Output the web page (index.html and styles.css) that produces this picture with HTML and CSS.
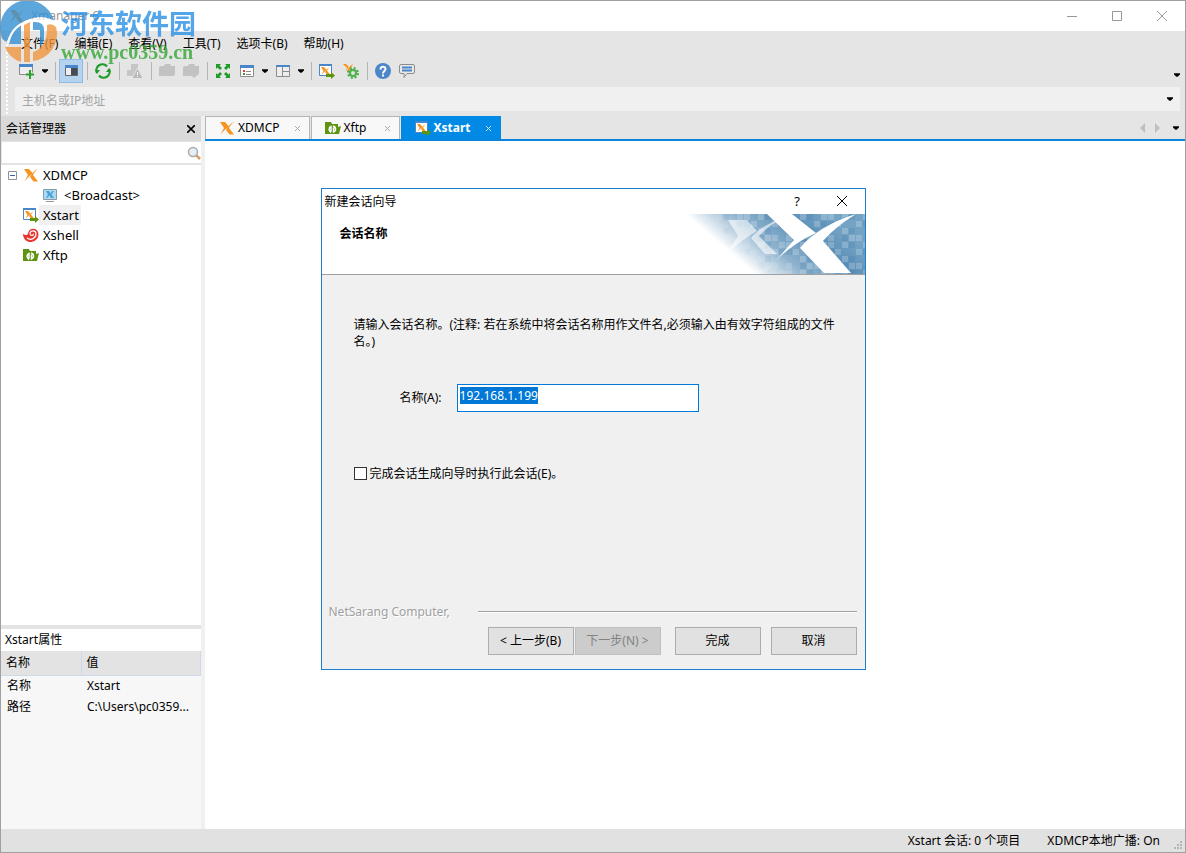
FILE: index.html
```html
<!DOCTYPE html>
<html lang="zh-CN">
<head>
    <meta charset="UTF-8">
    <meta name="viewport" content="width=device-width, initial-scale=1.0">
    <title>Xmanager 6</title>
    <link rel="stylesheet" href="styles.css">
</head>
<body>
    <!-- 公用图标 -->
    <svg class="defs" width="0" height="0" aria-hidden="true">
        <symbol id="i-x" viewBox="0 0 16 16">
            <path fill="#f7931e" d="M1 2h5l4 4.500Q6 9 1.500 14.500L5 8z"/>
            <path fill="#f7931e" d="M15.500 1.500Q11 5 10 8l5 6.500h-4.500L7 10Q10 4 15.500 1.500z"/>
        </symbol>
        <symbol id="i-xstart" viewBox="0 0 16 16">
            <path fill="#fff" stroke="#4a86c8" d="M.5 1.500h12v11H.5z"/>
            <path fill="#4a86c8" d="M0 1h13v2H0z"/>
            <path fill="#f7931e" d="M2 4h3l2.500 3Q5 9 2.500 11.500L4.500 8zM11 4Q8.500 6 8 7.500l3 4H8L6 9Q7.500 5.500 11 4z"/>
            <path fill="#5f9410" d="M7 11h5V9l4 3.500-4 3.500v-2H7z"/>
        </symbol>
        <symbol id="i-xftp" viewBox="0 0 16 16">
            <path fill="#5f9410" d="M0 2h6l1 2h6v3l3-1-2 8H0z"/>
            <path fill="none" stroke="#fff" stroke-width="1.500" d="M6 12.500C3.500 11 3.500 7.500 6 6.500v5M8 6c3 .5 3.500 5 .5 6V7.500"/>
        </symbol>
        <symbol id="i-xshell" viewBox="0 0 16 16">
            <path fill="#e8352e" d="M0 7c3 2 5 1 5-1 1-5 8-6 10-1 2 6-3 10-8 10-4 0-7-4-7-8z"/>
            <path fill="none" stroke="#fff" stroke-width="1.200" d="M4 11c4 3 9 0 9-4 0-4-6-4-6-.5 0 2.500 3.500 2.500 3.500.3"/>
        </symbol>
        <symbol id="i-monitor" viewBox="0 0 16 16">
            <path fill="#a9dbf7" stroke="#8b9aa5" d="M1.500 2.500h13v10h-13z"/>
            <path fill="#4b9fd5" d="M4 4h3l2 3-4 4H4l2-3.500zM12 4 9.500 7.500 12 11H9L7.500 8.500 10 4z"/>
            <path fill="#999" d="M4 14h8v1H4z"/>
        </symbol>
        <symbol id="i-caret" viewBox="0 0 5 3"><path d="M0 0h5v1L3 3H2L0 1z"/></symbol>
        <symbol id="i-close" viewBox="0 0 10 10"><path fill="none" stroke="currentColor" d="M0 0l10 10M10 0L0 10"/></symbol>
    </svg>

    <div class="window">
        <header class="titlebar">
            <svg class="icon" width="16" height="16"><use href="#i-x"/></svg>
            <h1>Xmanager 6</h1>
            <div class="win-btns">
                <button aria-label="最小化"><svg width="10" height="10"><path d="M0 5.500h10"/></svg></button>
                <button aria-label="最大化"><svg width="10" height="10"><path d="M.5.500h9v9h-9z"/></svg></button>
                <button aria-label="关闭"><svg width="10" height="10"><path d="M0 0l10 10M10 0L0 10"/></svg></button>
            </div>
        </header>

        <div class="bars">
            <nav class="menu">
                <button>文件(F)</button>
                <button>编辑(E)</button>
                <button>查看(V)</button>
                <button>工具(T)</button>
                <button>选项卡(B)</button>
                <button>帮助(H)</button>
            </nav>
            <div class="toolbar">
                <button class="tool" aria-label="新建"><svg width="16" height="16">
                    <path fill="#eee" stroke="#8c8c8c" d="M.5 1.500h13v10H.5z"/><path fill="#4a86c8" d="M0 1h14v3H0z"/>
                    <path stroke="#e5e5e5" stroke-width="4" d="M11 7v9M7 11.500h9"/><path stroke="#2ca02c" stroke-width="2" d="M11 7v9M7 11.500h8"/></svg></button>
                <button class="drop" aria-label="新建选项"><svg width="6" height="4"><use href="#i-caret"/></svg></button>
                <i class="sep"></i>
                <button class="tool on" aria-label="会话管理器"><svg width="16" height="16">
                    <path fill="#eee" stroke="#666" d="M2.500 2.500h12v10h-12z"/><path fill="#4a86c8" d="M2 2h13v3H2z"/><path fill="#444c55" d="M8 5h6v7H8z"/></svg></button>
                <i class="sep"></i>
                <button class="tool" aria-label="刷新"><svg width="16" height="16">
                    <path fill="none" stroke="#1f9d2b" stroke-width="2.200" d="M2 10A6 6 0 0 1 12 3.500M14 6a6 6 0 0 1-10 6.500"/>
                    <path fill="#1f9d2b" d="M0 7h5L2 11zM11 9h5l-2-4z"/></svg></button>
                <i class="sep"></i>
                <button class="tool" disabled aria-label="警告"><svg width="16" height="16">
                    <path fill="#c6c6c6" d="M4 1h7v6L8 13H0V7h4z"/><path fill="#b9b9b9" stroke="#e5e5e5" d="M10.500 5L16 15.500H5z"/><path stroke="#fff" d="M10.500 9v3m0 1v1"/></svg></button>
                <i class="sep"></i>
                <button class="tool" disabled aria-label="连接"><svg width="16" height="16">
                    <path fill="#c2c2c2" d="M0 5q0-2 2-2h3l1-2h5l1 2h4v9l-2 1H0z"/></svg></button>
                <button class="tool" disabled aria-label="断开"><svg width="16" height="16">
                    <path fill="#c2c2c2" d="M0 5q0-2 2-2h3l1-2h5l1 2h4v8l-5 4-2-2H0z"/></svg></button>
                <i class="sep"></i>
                <button class="tool" aria-label="全屏"><svg width="16" height="16">
                    <path fill="#1f9d2b" d="M1 1h5L4.500 2.500 7 5 5 7 2.500 4.500 1 6zM15 1v5l-1.500-1.500L11 7 9 5l2.500-2.500L10 1zM1 15v-5l1.500 1.500L5 9l2 2-2.500 2.500L6 15zM15 15h-5l1.500-1.500L9 11l2-2 2.500 2.500L15 10z"/></svg></button>
                <button class="tool" aria-label="查看方式"><svg width="16" height="16">
                    <path fill="#fff" stroke="#8c8c8c" d="M1.500 2.500h13v11h-13z"/><path fill="#4a86c8" d="M1 2h14v3H1z"/>
                    <path fill="#e33" d="M4 7h2v2H4z"/><path fill="#2ca02c" d="M4 10h2v2H4z"/><path stroke="#888" d="M7 8.500h5M7 11.500h5"/></svg></button>
                <button class="drop" aria-label="查看选项"><svg width="6" height="4"><use href="#i-caret"/></svg></button>
                <button class="tool" aria-label="布局"><svg width="16" height="16">
                    <path fill="#eee" stroke="#8c8c8c" d="M1.500 2.500h13v11h-13zM7.500 3v10M8 8.500h6"/><path fill="#4a86c8" d="M1 2h14v2H1z"/></svg></button>
                <button class="drop" aria-label="布局选项"><svg width="6" height="4"><use href="#i-caret"/></svg></button>
                <i class="sep"></i>
                <button class="tool" aria-label="Xstart"><svg width="16" height="16"><use href="#i-xstart"/></svg></button>
                <button class="tool" aria-label="Xconfig"><svg width="16" height="16">
                    <path fill="#f7931e" d="M0 1h3l3 3-4 5 2-4zM10 1Q6 3 4 9h2z"/>
                    <circle cx="10" cy="10" r="4.700" fill="none" stroke="#4cb04c" stroke-width="2.500" stroke-dasharray="2 1.690"/>
                    <circle cx="10" cy="10" r="3" fill="none" stroke="#4cb04c" stroke-width="2"/></svg></button>
                <i class="sep"></i>
                <button class="tool" aria-label="帮助"><svg width="16" height="16">
                    <circle cx="8" cy="8" r="8" fill="#4a86c8"/>
                    <path fill="none" stroke="#fff" stroke-width="2" d="M5.500 6.500c0-3.500 5-3.500 5-.5C10.500 8 8 8 8 10.500M8 11.500v2"/></svg></button>
                <button class="tool" aria-label="反馈"><svg width="16" height="16">
                    <path fill="#e9e9e9" stroke="#8c8c8c" d="M2 1.500h12q1.500 0 1.500 1.500v6q0 1.500-1.500 1.500H8L5 14.500v-4H2Q.5 10.500.5 9V3Q.5 1.500 2 1.500z"/>
                    <path stroke="#4a86c8" d="M3 4.500h10M3 7.500h10" stroke-width="2"/></svg></button>
                <button class="drop more" aria-label="更多"><svg width="6" height="4"><use href="#i-caret"/></svg></button>
            </div>
            <div class="address">
                <input type="text" placeholder="主机名或IP地址" aria-label="主机名或IP地址">
                <button class="drop" aria-label="历史"><svg width="6" height="4"><use href="#i-caret"/></svg></button>
            </div>
        </div>

        <div class="main">
            <aside class="sidebar">
                <div class="side-head">
                    <h2>会话管理器</h2>
                    <button aria-label="关闭会话管理器"><svg width="8" height="8" viewBox="0 0 10 10" stroke-width="2"><use href="#i-close"/></svg></button>
                </div>
                <div class="search">
                    <input type="text" aria-label="搜索会话">
                    <svg width="14" height="14"><path stroke="#d9a066" stroke-width="2.500" d="M9 9l4 4"/><circle cx="6" cy="6" r="4.500" fill="#e3eef5" stroke="#aaa" stroke-width="1.500"/></svg>
                </div>
                <ul class="tree">
                    <li><svg class="fold" width="9" height="9"><path fill="#fff" stroke="#919191" d="M.5.500h8v8h-8z"/><path stroke="#3b5fa8" d="M2 4.500h5"/></svg>
                        <svg width="16" height="16"><use href="#i-x"/></svg><span>XDMCP</span></li>
                    <li class="child"><svg width="16" height="16"><use href="#i-monitor"/></svg><span>&lt;Broadcast&gt;</span></li>
                    <li class="leaf"><svg width="16" height="16"><use href="#i-xstart"/></svg><span class="sel">Xstart</span></li>
                    <li class="leaf"><svg width="16" height="16"><use href="#i-xshell"/></svg><span>Xshell</span></li>
                    <li class="leaf"><svg width="16" height="16"><use href="#i-xftp"/></svg><span>Xftp</span></li>
                </ul>
                <section class="props">
                    <h2>Xstart属性</h2>
                    <table>
                        <thead><tr><th>名称</th><th>值</th></tr></thead>
                        <tbody>
                            <tr><td>名称</td><td>Xstart</td></tr>
                            <tr><td>路径</td><td>C:\Users\pc0359...</td></tr>
                        </tbody>
                    </table>
                </section>
            </aside>

            <main class="content">
                <div class="tabs">
                    <div class="tab"><svg width="16" height="16"><use href="#i-x"/></svg><a href="#">XDMCP</a><button aria-label="关闭 XDMCP"><svg width="5" height="5" viewBox="0 0 10 10" stroke-width="2"><use href="#i-close"/></svg></button></div>
                    <div class="tab"><svg width="16" height="16"><use href="#i-xftp"/></svg><a href="#">Xftp</a><button aria-label="关闭 Xftp"><svg width="5" height="5" viewBox="0 0 10 10" stroke-width="2"><use href="#i-close"/></svg></button></div>
                    <div class="tab active"><svg width="16" height="16"><use href="#i-xstart"/></svg><a href="#">Xstart</a><button aria-label="关闭 Xstart"><svg width="5" height="5" viewBox="0 0 10 10" stroke-width="2"><use href="#i-close"/></svg></button></div>
                    <div class="tab-nav">
                        <button disabled aria-label="上一个"><svg width="5" height="10"><path fill="#bfbfbf" d="M5 0v10L0 5z"/></svg></button>
                        <button disabled aria-label="下一个"><svg width="5" height="10"><path fill="#bfbfbf" d="M0 0v10l5-5z"/></svg></button>
                        <button class="drop" aria-label="标签列表"><svg width="6" height="4"><use href="#i-caret"/></svg></button>
                    </div>
                </div>
            </main>
        </div>

        <footer class="status">
            <span>Xstart 会话: 0 个项目</span>
            <span>XDMCP本地广播: On</span>
            <svg width="10" height="10" fill="#b5b5b5"><path d="M7 1h2v2H7zM4 4h2v2H4zM7 4h2v2H7zM1 7h2v2H1zM4 7h2v2H4zM7 7h2v2H7z"/></svg>
        </footer>
    </div>

    <!-- 新建会话向导 -->
    <div class="overlay">
        <form class="dialog" role="dialog" aria-labelledby="dlg-title">
            <div class="dlg-bar">
                <h2 id="dlg-title">新建会话向导</h2>
                <button type="button" aria-label="帮助">?</button>
                <button type="button" aria-label="关闭"><svg width="10" height="10"><use href="#i-close"/></svg></button>
            </div>
            <div class="dlg-head">
                <h3>会话名称</h3>
                <svg width="205" height="60" viewBox="0 0 205 60">
                    <defs>
                        <linearGradient id="g1" gradientUnits="userSpaceOnUse" x1="60" y1="30" x2="120" y2="-40">
                            <stop offset="0" stop-color="#fff"/>
                            <stop offset=".35" stop-color="#8fb3ce"/>
                            <stop offset=".7" stop-color="#5c90b8"/>
                            <stop offset="1.000" stop-color="#75a3c4"/>
                        </linearGradient>
                        <pattern id="g2" width="42" height="28" patternUnits="userSpaceOnUse">
                            <path fill="#fff" fill-opacity=".2" d="M0 0h6v6H0zM14 0h6v6h-6zM35 0h6v6h-6zM7 7h6v6H7zM28 7h6v6h-6zM14 14h6v6h-6zM0 21h6v6H0zM21 21h6v6h-6zM28 21h6v6h-6z"/>
                            <path fill="#3d78a8" fill-opacity=".2" d="M21 0h6v6h-6zM0 7h6v6H0zM35 7h6v6h-6zM21 14h6v6h-6zM14 21h6v6h-6z"/>
                        </pattern>
                        <linearGradient id="g3" gradientUnits="userSpaceOnUse" x1="60" y1="30" x2="120" y2="-40">
                            <stop offset=".05" stop-color="#fff" stop-opacity="0"/>
                            <stop offset=".4" stop-color="#fff"/>
                        </linearGradient>
                        <mask id="m1"><path fill="url(#g3)" d="M0 0h205v60H0z"/></mask>
                    </defs>
                    <path fill="url(#g1)" d="M0 0h205v60H0z"/>
                    <path fill="url(#g2)" mask="url(#m1)" d="M0 0h205v60H0z"/>
                    <path fill="#fff" fill-opacity=".6" d="M68 6h19l10 11Q78 28 65 42l13-20zM123 4Q100 12 91 24l14 16h12L99 22Q108 12 123 4z"/>
                    <path fill="#fff" d="M107 0h25l24 19Q125 33 104 60l30-34zM196 0Q158 12 140 34l24 25h27L163 27Q175 13 196 0z"/>
                </svg>
            </div>
            <div class="dlg-body">
                <p>请输入会话名称。(注释: 若在系统中将会话名称用作文件名,必须输入由有效字符组成的文件名。)</p>
                <div class="field">
                    <label for="name">名称(A):</label>
                    <input type="text" id="name" value="192.168.1.199">
                </div>
                <label class="check"><input type="checkbox"><span>完成会话生成向导时执行此会话(E)。</span></label>
            </div>
            <div class="dlg-foot">
                <div class="brand"><span>NetSarang Computer,</span><hr></div>
                <div class="actions">
                    <button type="button">&lt; 上一步(B)</button>
                    <button type="button" disabled>下一步(N) &gt;</button>
                    <button type="button" class="gap">完成</button>
                    <button type="button" class="gap">取消</button>
                </div>
            </div>
        </form>
    </div>

    <!-- 左上角水印 -->
    <div class="watermark">
        <svg width="58" height="62" viewBox="0 0 58 62">
            <path fill="#3490d3" d="M1 33A27 27 0 0 1 54 20Q42 13 30 18Q12 24 7 41Q1 39 1 33z"/>
            <path fill="#3490d3" d="M9 43Q12 28 21 24v19zM33 21q11-1 11 8v11l-4 5V29h-7z"/>
            <path fill="#f0953f" d="M5 46h16v15Q9 57 5 46zM24 24l6-3v40h-6zM56 26A27 27 0 0 1 33 60v-9Q48 46 47 24q5-2 9 2z"/>
            <path fill="none" stroke="#fff" stroke-width="2" d="M8 42Q12 24 31 19Q44 15 55 21"/>
        </svg>
        <div>
            <strong>河东软件园</strong>
            <em>www.pc0359.cn</em>
        </div>
    </div>

    <script>
        // 打开时选中默认名称
        var nameInput = document.getElementById("name")
        nameInput.focus()
        nameInput.select()
    </script>
</body>
</html>
```
FILE: styles.css
```css
*{
    padding: 0;
    margin: 0;
    box-sizing: border-box;
}
body{
    font: 12px/16px "Noto Sans", "Noto Sans CJK SC", sans-serif;
    color: #000;
    background-color: #fff;
}
button,
input{
    font: inherit;
    color: inherit;
    border: 0;
    background: none;
    outline: none;
}
button{
    display: flex;
    align-items: center;
    justify-content: center;
    white-space: nowrap;
}
h1,
h2,
h3{
    font-size: 12px;
    font-weight: normal;
}
li{
    list-style: none;
}
svg{
    flex: none;
    display: block;
}
.defs{
    position: absolute;
}

.window{
    height: 100vh;
    display: flex;
    flex-direction: column;
    border: 1px solid #a0a0a0;
}
/* 标题栏 */
.titlebar{
    height: 30px;
    display: flex;
    align-items: center;
    gap: 6px;
    padding-left: 8px;
    color: #999;
}
.win-btns{
    display: flex;
    margin-left: auto;
    padding-right: 1px;
}
.win-btns button{
    width: 45px;
    height: 28px;
}
.win-btns path{
    fill: none;
    stroke: #999;
}

/* 菜单和工具栏 */
.bars{
    padding: 0 5px 5px 14px;
    background: radial-gradient(circle, #fff 1px, transparent 1px) 4px 0 / 4px 4px repeat-y #e5e5e5;
}
.menu{
    height: 25px;
    display: flex;
    align-items: center;
    gap: 16px;
    padding-left: 6px;
}
.toolbar{
    height: 31px;
    display: flex;
    align-items: center;
    padding-bottom: 1px;
}
.tool{
    width: 24px;
    height: 24px;
}
.tool.on{
    background-color: #b3d3ee;
    border: 1px solid #8fbde4;
}
.drop{
    width: 12px;
    height: 24px;
}
.drop.more{
    width: 6px;
    margin-left: auto;
    padding-top: 8px;
}
.sep{
    width: 1px;
    height: 18px;
    margin: 0 3px 0 4px;
    background-color: #b5b5b5;
}
.address{
    height: 24px;
    display: flex;
    background-color: #f0f0f0;
    padding: 0 4px 0 7px;
}
.address input{
    flex: 1;
    min-width: 0;
    padding-top: 3px;
}
.address input::placeholder{
    color: #a5a5a5;
}

.main{
    flex: 1;
    min-height: 0;
    display: grid;
    grid-template-columns: 200px 1fr;
    column-gap: 4px;
    background-color: #f0f0f0;
}
/* 左侧 */
.sidebar{
    display: flex;
    flex-direction: column;
    background-color: #e3e3e3;
}
.side-head{
    height: 25px;
    display: flex;
    align-items: center;
    justify-content: space-between;
    padding: 0 6px 0 5px;
    background-color: #d9d9d9;
}
.search{
    height: 21px;
    display: flex;
    align-items: center;
    margin: 1px 0 2px 1px;
    background-color: #fff;
}
.search input{
    flex: 1;
    min-width: 0;
}
.tree{
    flex: 1;
    min-height: 0;
    margin-bottom: 4px;
    background-color: #fff;
    font-size: 13px;
}
.tree li{
    height: 20px;
    display: flex;
    align-items: center;
    padding-left: 7px;
}
.tree li.leaf{
    padding-left: 22px;
}
.tree li.child{
    padding-left: 41px;
}
.tree .fold{
    margin-right: 6px;
}
.tree span{
    line-height: 20px;
    padding: 0 2px 0 4px;
}
.tree .child span{
    padding-left: 6px;
}
.tree .sel{
    background-color: #f0f0f0;
}
.props{
    height: 200px;
    background-color: #f7f7f7;
}
.props h2{
    background-color: #fff;
    line-height: 22px;
    padding-left: 4px;
}
.props table{
    width: 100%;
    border-collapse: collapse;
    table-layout: fixed;
}
.props th{
    height: 24px;
    text-align: left;
    font-weight: normal;
    background-color: #e3e3e3;
    border: solid #ccd8ec;
    border-width: 0 1px 1px 0;
    padding-left: 5px;
}
.props th:first-child{
    width: 80px;
}
.props td{
    height: 21px;
    padding-left: 6px;
    white-space: nowrap;
}

/* 右侧标签页 */
.content{
    background-color: #fff;
}
.tabs{
    height: 25px;
    display: flex;
    gap: 1px;
    background-color: #e5e5e5;
    border-bottom: 2px solid #0a84dc;
}
.tab{
    display: flex;
    align-items: center;
    padding: 0 9px 0 13px;
    background-color: #f8f8f8;
    border: 1px solid #b5b5b5;
    border-bottom: 0;
}
.tab a{
    min-width: 44px;
    color: #000;
    text-decoration: none;
    padding: 0 15px 0 3px;
}
.tab button{
    color: #aaa;
}
.tab.active{
    background-color: #008ae6;
    border-color: #008ae6;
}
.tab.active a{
    color: #fff;
    font-weight: bold;
}
.tab.active button{
    color: #cde8ff;
}
.tab-nav{
    display: flex;
    gap: 10px;
    margin-left: auto;
    padding-right: 3px;
}

/* 状态栏 */
.status{
    height: 23px;
    display: flex;
    align-items: center;
    justify-content: flex-end;
    background-color: #e1e1e1;
}
.status span{
    margin-right: 27px;
}
.status span + span{
    margin-right: 13px;
}
.status svg{
    align-self: flex-end;
    margin: 0 2px 2px 0;
}

/* 对话框 */
.overlay{
    position: fixed;
    top: 5px;
    right: 0;
    bottom: 0;
    left: 0;
    display: flex;
    align-items: center;
    justify-content: center;
}
.dialog{
    width: 545px;
    background-color: #f0f0f0;
    border: 1px solid #1a7fd0;
}
.dlg-bar{
    height: 25px;
    display: flex;
    background-color: #fff;
    padding-left: 3px;
}
.dlg-bar h2{
    flex: 1;
    line-height: 25px;
}
.dlg-bar button{
    width: 45px;
    font-size: 13px;
}
.dlg-head{
    display: flex;
    justify-content: space-between;
    background-color: #fff;
    border-bottom: 1px solid #a0a0a0;
}
.dlg-head h3{
    font-weight: bold;
    line-height: 40px;
    padding-left: 18px;
}
.dlg-body{
    padding: 41px 26px 0 32px;
}
.dlg-body p{
    line-height: 17px;
}
.field{
    display: flex;
    align-items: center;
    gap: 15px;
    margin: 34px 0 54px 46px;
}
.field input{
    width: 242px;
    height: 28px;
    padding: 3px 2px 7px;
    line-height: 16px;
    background-color: #fff;
    border: 1px solid #0078d7;
}
.field input::selection{
    color: #fff;
    background-color: #0078d7;
}
.check{
    display: inline-flex;
    align-items: center;
    gap: 3px;
}
.check input{
    appearance: none;
    width: 13px;
    height: 13px;
    background-color: #fff;
    border: 1px solid #333;
}
.check input:checked{
    background-color: #0078d7;
}
.dlg-foot{
    padding: 120px 8px 14px 7px;
}
.brand{
    display: flex;
    align-items: center;
    gap: 28px;
    color: #a0a0a0;
    text-shadow: 1px 1px #fff;
}
.brand hr{
    flex: 1;
    border: 0;
    border-top: 1px solid #a0a0a0;
    border-bottom: 1px solid #fff;
}
.actions{
    display: flex;
    justify-content: flex-end;
    gap: 1px;
    margin-top: 7px;
}
.actions button{
    width: 86px;
    height: 28px;
    background-color: #e1e1e1;
    border: 1px solid #adadad;
}
.actions button:disabled{
    color: #838383;
    background-color: #ccc;
    border-color: #bfbfbf;
}
.actions .gap{
    margin-left: 9px;
}
.actions button:disabled + .gap{
    margin-left: 13px;
}

/* 水印 */
.watermark{
    position: absolute;
    top: 1px;
    left: 0;
    display: flex;
    gap: 3px;
    opacity: .8;
    pointer-events: none;
}
.watermark strong{
    display: block;
    font-size: 27px;
    line-height: 32px;
    padding-top: 7px;
    color: #2a90e4;
}
.watermark em{
    display: block;
    font: bold 20px/24px "Liberation Serif", serif;
    color: #35a535;
}
```
